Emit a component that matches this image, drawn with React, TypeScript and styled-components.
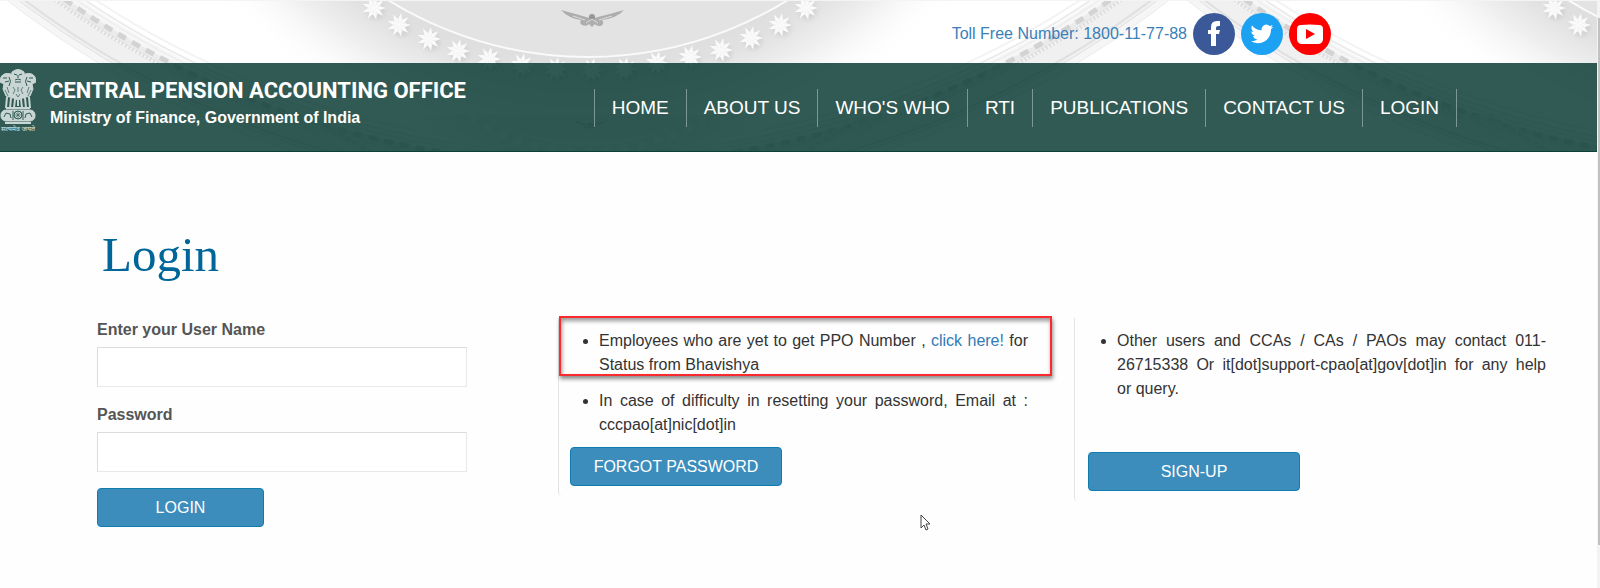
import React from "react";
import styled, { createGlobalStyle } from "styled-components";

const GlobalStyle = createGlobalStyle`
  *, *::before, *::after { box-sizing: border-box; }
  body {
    margin: 0;
    background: #fefefe;
    color: #333;
    font: 16px/24px "Liberation Sans", Arial, sans-serif;
  }
  a { text-decoration: none; }
`;

const Page = styled.div`
  position: relative;
  display: flex;
  min-height: 100vh;
  overflow: hidden;
`;

const Content = styled.div`
  flex: 1;
  min-width: 0;
`;

const ScrollTrack = styled.div`
  flex: 0 0 3px;
  padding: 18px 0 0 1px;
  background: #f3f3f3;
`;

const ScrollThumb = styled.div`
  height: 527px;
  background: #c1c1c1;
`;

const Header = styled.header`
  position: relative;
  overflow: hidden;
`;

const CeilingArt = styled.svg`
  position: absolute;
  top: 0;
  left: 0;
`;

const TopBar = styled.div`
  position: relative;
  display: flex;
  align-items: center;
  justify-content: flex-end;
  gap: 6px;
  height: 63px;
  padding: 4px 266px 0 0;
`;

const TollFree = styled.a`
  color: #3a7fb9;
`;

const SocialLink = styled.a`
  display: block;
  width: 42px;
  height: 42px;
`;

const NavBar = styled.div`
  position: relative;
  display: flex;
  justify-content: space-between;
  align-items: flex-start;
  height: 89px;
  padding-right: 140px;
  background: rgba(7, 57, 49, 0.83);
  border-bottom: 1px solid #0b4136;
`;

const Brand = styled.a`
  display: flex;
  gap: 13px;
  padding-top: 6px;
  color: #fff;
`;

const BrandText = styled.div`
  display: flex;
  flex-direction: column;
  padding-top: 7px;
  font-weight: bold;
  white-space: nowrap;
`;

const OfficeName = styled.span`
  font-family: Roboto, "Liberation Sans", sans-serif;
  font-size: 22px;
  line-height: 30px;
`;

const Ministry = styled.span`
  font-size: 16px;
  line-height: 24px;
  padding-left: 1px;
`;

const Nav = styled.nav`
  display: flex;
  margin-top: 26px;
  border-left: 1px solid #7d9793;
`;

const NavLink = styled.a`
  padding: 0 17px;
  border-right: 1px solid #7d9793;
  color: #fff;
  font-size: 19px;
  line-height: 38px;
  white-space: nowrap;
`;

const Main = styled.main`
  padding: 75px 36px 0 97px;
`;

const Heading = styled.h1`
  margin: 0 0 35px 5px;
  color: #069;
  font: 49px/56px "Liberation Serif", "Times New Roman", serif;
`;

const Columns = styled.div`
  display: grid;
  grid-template-columns: 461fr 516fr 487fr;
  align-items: start;
`;

const LoginForm = styled.form`
  display: flex;
  flex-direction: column;
  align-items: flex-start;
  padding-right: 91px;
`;

const Label = styled.label`
  margin-bottom: 5px;
  color: #555;
  font-weight: bold;
`;

const TextInput = styled.input`
  width: 100%;
  height: 40px;
  margin-bottom: 16px;
  padding: 6px 12px;
  border: 1px solid #e8e8e8;
  border-top-color: #dcdcdc;
  border-left-color: #dcdcdc;
  background: #fff;
  font: inherit;
`;

const Button = styled.button<{ $width: number }>`
  width: ${(p) => p.$width}px;
  height: 39px;
  padding: 0;
  border: 1px solid #0f7cb0;
  border-radius: 4px;
  background: #3c8dbc;
  color: #fff;
  font: inherit;
`;

const Panel = styled.section<{ $end?: boolean }>`
  display: flex;
  flex-direction: column;
  align-items: flex-start;
  justify-content: space-between;
  min-height: ${(p) => (p.$end ? 183 : 178)}px;
  padding: 11px ${(p) => (p.$end ? 15 : 46)}px 10px ${(p) => (p.$end ? 13 : 11)}px;
  border-left: 1px solid #e4e4e4;
  border-bottom-left-radius: 4px;
`;

const Notes = styled.ul`
  display: flex;
  flex-direction: column;
  gap: 12px;
  width: 100%;
  margin: 0;
  padding-left: 29px;
  text-align: justify;
`;

const Note = styled.li<{ $marked?: boolean }>`
  position: relative;
  ${(p) =>
    p.$marked &&
    `&::before {
      content: "";
      position: absolute;
      inset: -13px -24px 1px -40px;
      border: 2px solid #fa2a2e;
      box-shadow: 1px 3px 4px rgba(0, 0, 0, 0.45), inset 1px 3px 4px rgba(0, 0, 0, 0.4);
      pointer-events: none;
    }`}
`;

const InlineLink = styled.a`
  color: #337ab7;
`;

const Pointer = styled.svg`
  position: absolute;
  left: 920px;
  top: 514px;
`;

const STARS = [
  [374, 8], [399, 25], [429, 39], [458, 51], [489, 59], [522, 65], [556, 69], [592, 70],
  [625, 69], [657, 63], [690, 57], [721, 50], [751, 38], [780, 25], [806, 8],
];

// Concentric mouldings of the dome: radius, thickness, shade, optional dash.
const RINGS: { r: number; w: number; c: string; dash?: string }[] = [
  { r: 927, w: 44, c: "#f6f6f6" },
  { r: 931, w: 20, c: "#f0f0f0" },
  { r: 897, w: 2, c: "#f3f3f3" },
  { r: 903, w: 2, c: "#ececec" },
  { r: 908, w: 1, c: "#e9e9e9" },
  { r: 916, w: 7, c: "#ebebeb" },
  { r: 914, w: 5, c: "#d3d3d3", dash: "9 7" },
  { r: 920, w: 4, c: "#dedede", dash: "2 2" },
  { r: 938, w: 2, c: "#e0e0e0" },
  { r: 942, w: 1, c: "#dfdfdf" },
  { r: 949, w: 1, c: "#ececec" },
];

function Ceiling() {
  return (
    <CeilingArt width="2360" height="152" aria-hidden="true">
      <defs>
        <radialGradient id="halo" gradientUnits="userSpaceOnUse" cx="588" cy="-322" r="490">
          <stop offset="0.77" stopColor="#dedede" />
          <stop offset="0.81" stopColor="#e1e1e1" />
          <stop offset="0.88" stopColor="#efefef" />
          <stop offset="1" stopColor="#fff" stopOpacity="0" />
        </radialGradient>
        <filter id="soft" x="-50%" y="-50%" width="200%" height="200%">
          <feGaussianBlur stdDeviation="2" />
        </filter>
        <g id="star">
          <circle cx="2" cy="3" r="9" fill="#bbb" opacity="0.4" filter="url(#soft)" />
          {[0, 40, 80, 120, 160, 200, 240, 280, 320].map((a) => (
            <path key={a} d="M0,1 L-2,-6 L0,-12 L2,-6Z" fill="#fafafa" transform={`rotate(${a + 10})`} />
          ))}
        </g>
        <g id="ceiling">
          {RINGS.map((ring) => (
            <circle
              key={ring.r}
              cx="588"
              cy="-750"
              r={ring.r}
              fill="none"
              stroke={ring.c}
              strokeWidth={ring.w}
              strokeDasharray={ring.dash}
            />
          ))}
          <circle cx="588" cy="-322" r="490" fill="url(#halo)" />
          <circle cx="588" cy="-322" r="379" fill="#e3e3e3" stroke="#fafafa" strokeWidth="2" />
          {STARS.map(([x, y]) => (
            <use key={x} href="#star" x={x} y={y} />
          ))}
          <g fill="#adadad">
            <path d="M561,10 Q576,14 586,17 L590,18 H594 L598,17 Q610,14 624,10 Q617,18 602,20 Q605,23 601,26 Q596,26 595,24 L592,27 L589,24 Q587,27 582,25 Q579,23 581,20 Q568,18 561,10Z" />
            <circle cx="592" cy="17" r="3" fill="#959595" />
            <path d="M573,16 L585,20 M612,16 L599,20 M586,23 L592,19 L598,23" stroke="#dcdcdc" fill="none" />
          </g>
        </g>
        <clipPath id="lower"><rect y="115" width="2360" height="37" /></clipPath>
      </defs>
      <rect width="2360" height="152" fill="#fff" />
      <use href="#ceiling" />
      <use href="#ceiling" x="1180" />
      <g clipPath="url(#lower)" opacity="0.5">
        <use href="#ceiling" transform="translate(276 115) scale(0.53)" />
        <use href="#ceiling" transform="translate(1456 115) scale(0.53)" />
      </g>
      <rect width="2360" height="1" fill="#f4f4f4" />
    </CeilingArt>
  );
}

function Emblem() {
  return (
    <svg width="36" height="66" viewBox="0 0 36 66" aria-hidden="true">
      <g fill="#c9d6d3" stroke="#c9d6d3" strokeLinejoin="round">
        <path d="M12,3 Q18,-2 24,3 L25,10 L23,15 L18,17 L13,15 L11,10Z" />
        <path d="M11,5 Q4,3 1,8 L0,13 L4,15 L3,20 L6,27 L13,29 L14,16Z" />
        <path d="M25,5 Q32,3 35,8 L36,13 L32,15 L33,20 L30,27 L23,29 L22,16Z" />
        <path d="M11,16 L25,16 L25,28 L18,31 L11,28Z" />
        <path d="M7,28 L6,39 M11,29 L10,39 M15,30 L14,39 M21,30 L22,39 M25,29 L26,39 M29,28 L30,39 M18,31 V37" strokeWidth="2" fill="none" />
        <rect x="1" y="41" width="34" height="11" rx="5" />
        <path d="M6,39 H30 M5,54 H31" strokeWidth="2" />
      </g>
      <g fill="none" stroke="#315a54">
        <path d="M14,5 L17,6 M22,5 L19,6 M18,6 V9 M15,11 Q18,9 21,11 M15,13 H21" />
        <path d="M3,9 L7,9 M5,13 L9,12 M33,9 L29,9 M31,13 L27,12 M9,8 Q12,12 9,17 M27,8 Q24,12 27,17" />
        <path d="M13,18 L15,21 L13,25 M18,18 V23 M23,18 L21,21 L23,25 M16,25 L18,28 L20,25 M7,18 L9,24 M29,18 L27,24 M5,21 L8,27 M31,21 L28,27" strokeWidth="0.7" />
        <circle cx="18" cy="46" r="4" />
        <path d="M18,42 V50 M14,46 H22 M15,43 L21,49 M21,43 L15,49" strokeWidth="0.6" />
        <path d="M4,48 L6,44 L10,45 L11,49 M25,49 L26,45 L30,44 L32,48 M13,42 V51 M23,42 V51" />
      </g>
      <text x="18" y="62" fill="#dfe8e6" fontSize="7" textAnchor="middle" fontFamily="Noto Sans Devanagari, Noto Sans, sans-serif">सत्यमेव जयते</text>
    </svg>
  );
}

const FacebookIcon = () => (
  <svg width="42" height="42" viewBox="0 0 42 42" aria-hidden="true">
    <circle cx="21" cy="21" r="21" fill="#3b5998" />
    <path fill="#fff" d="M18,33 V21 H15 V17 H18 V14 Q18,8 24,8 H27 V13 H25 Q23,13 23,15 V17 H27 L26,21 H23 V33Z" />
  </svg>
);

const TwitterIcon = () => (
  <svg width="42" height="42" viewBox="0 0 42 42" aria-hidden="true">
    <circle cx="21" cy="21" r="21" fill="#1da1f2" />
    <path
      fill="#fff"
      transform="translate(9.5 9.5) scale(0.95)"
      d="M23.95 4.57a10 10 0 0 1-2.82.78 4.96 4.96 0 0 0 2.16-2.73c-.95.56-2 .96-3.13 1.18a4.92 4.92 0 0 0-8.38 4.48C7.69 8.1 4.07 6.13 1.64 3.16a4.82 4.82 0 0 0-.67 2.48c0 1.71.87 3.21 2.19 4.1a4.9 4.9 0 0 1-2.23-.62v.06a4.92 4.92 0 0 0 3.95 4.83 5 5 0 0 1-2.21.08 4.94 4.94 0 0 0 4.6 3.42A9.87 9.87 0 0 1 0 19.54a14 14 0 0 0 7.55 2.21c9.05 0 14-7.5 14-13.98 0-.21 0-.42-.02-.63a9.94 9.94 0 0 0 2.46-2.55z"
    />
  </svg>
);

const YoutubeIcon = () => (
  <svg width="42" height="42" viewBox="0 0 42 42" aria-hidden="true">
    <circle cx="21" cy="21" r="21" fill="#f00" />
    <path fill="#fff" d="M12,12 Q21,11 30,12 Q34,12 34,16 V26 Q34,30 30,31 Q21,31 12,31 Q8,30 8,26 V16 Q8,12 12,12Z" />
    <path fill="#f00" d="M17,16 L26,21 L17,26Z" />
  </svg>
);

const NAV = ["HOME", "ABOUT US", "WHO'S WHO", "RTI", "PUBLICATIONS", "CONTACT US", "LOGIN"];

export default function App() {
  return (
    <Page>
      <GlobalStyle />
      <Content>
        <Header>
          <Ceiling />
          <TopBar>
            <TollFree href="tel:1800117788">Toll Free Number: 1800-11-77-88</TollFree>
            <SocialLink href="#facebook" aria-label="Facebook"><FacebookIcon /></SocialLink>
            <SocialLink href="#twitter" aria-label="Twitter"><TwitterIcon /></SocialLink>
            <SocialLink href="#youtube" aria-label="YouTube"><YoutubeIcon /></SocialLink>
          </TopBar>
          <NavBar>
            <Brand href="#home">
              <Emblem />
              <BrandText>
                <OfficeName>CENTRAL PENSION ACCOUNTING OFFICE</OfficeName>
                <Ministry>Ministry of Finance, Government of India</Ministry>
              </BrandText>
            </Brand>
            <Nav>
              {NAV.map((item) => (
                <NavLink key={item} href="#">{item}</NavLink>
              ))}
            </Nav>
          </NavBar>
        </Header>
        <Main>
          <Heading>Login</Heading>
          <Columns>
            <LoginForm onSubmit={(e) => e.preventDefault()}>
              <Label htmlFor="username">Enter your User Name</Label>
              <TextInput id="username" type="text" />
              <Label htmlFor="password">Password</Label>
              <TextInput id="password" type="password" />
              <Button $width={167} type="submit">LOGIN</Button>
            </LoginForm>
            <Panel>
              <Notes>
                <Note $marked>
                  Employees who are yet to get PPO Number , <InlineLink href="#bhavishya">click here!</InlineLink> for
                  Status from Bhavishya
                </Note>
                <Note>In case of difficulty in resetting your password, Email at : cccpao[at]nic[dot]in</Note>
              </Notes>
              <Button $width={212} type="button">FORGOT PASSWORD</Button>
            </Panel>
            <Panel $end>
              <Notes>
                <Note>
                  Other users and CCAs / CAs / PAOs may contact 011-26715338 Or it[dot]support-cpao[at]gov[dot]in for
                  any help or&nbsp;query.
                </Note>
              </Notes>
              <Button $width={212} type="button">SIGN-UP</Button>
            </Panel>
          </Columns>
        </Main>
      </Content>
      <ScrollTrack><ScrollThumb /></ScrollTrack>
      <Pointer width="12" height="18" viewBox="0 0 12 18" aria-hidden="true">
        <path d="M1,1 V14 L4,11 L6,16 L8,15 L6,10 H10Z" fill="#fff" stroke="#444" />
      </Pointer>
    </Page>
  );
}
